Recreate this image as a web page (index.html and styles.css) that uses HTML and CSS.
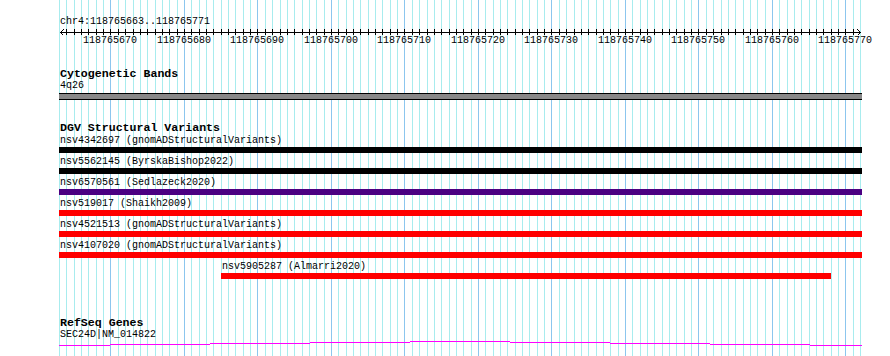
FILE: index.html
```html
<!doctype html>
<html lang="en">
<head>
<meta charset="utf-8">
<title>chr4:118765663..118765771</title>
<link rel="stylesheet" href="styles.css">
</head>
<body>

	<div class="view">

		<div class="gutter"></div>

		<div class="panel">

			<svg class="grid" id="grid" width="803" height="356"></svg>

			<div class="ruler">
				<div class="label">chr4:118765663..118765771</div>
				<svg class="axis" id="axis" width="803" height="9"></svg>
				<div class="ticks" id="ticks"></div>
			</div>

			<section class="track">
				<h2>Cytogenetic Bands</h2>
				<div class="label">4q26</div>
				<div class="band"></div>
			</section>

			<section class="track">
				<h2>DGV Structural Variants</h2>
				<div class="feature">
					<div class="label">nsv4342697 (gnomADStructuralVariants)</div>
					<div class="bar black"></div>
				</div>
				<div class="feature">
					<div class="label">nsv5562145 (ByrskaBishop2022)</div>
					<div class="bar black"></div>
				</div>
				<div class="feature">
					<div class="label">nsv6570561 (Sedlazeck2020)</div>
					<div class="bar indigo"></div>
				</div>
				<div class="feature">
					<div class="label">nsv519017 (Shaikh2009)</div>
					<div class="bar red"></div>
				</div>
				<div class="feature">
					<div class="label">nsv4521513 (gnomADStructuralVariants)</div>
					<div class="bar red"></div>
				</div>
				<div class="feature">
					<div class="label">nsv4107020 (gnomADStructuralVariants)</div>
					<div class="bar red"></div>
				</div>
				<div class="feature" style="margin-left:162px;width:610px">
					<div class="label">nsv5905287 (Almarri2020)</div>
					<div class="bar red"></div>
				</div>
			</section>

			<section class="track">
				<h2 class="refseq">RefSeq Genes</h2>
				<div class="label">SEC24D|NM_014822</div>
				<svg class="gene" id="gene" width="803" height="8"></svg>
			</section>

		</div>

	</div>

<script>

	const start = 118765663;
	const step = 7.35;
	const ns = 'http://www.w3.org/2000/svg';

	function line( svg, x1, y1, x2, y2, cls ) {

		const l = document.createElementNS( ns, 'line' );
		l.setAttribute( 'x1', x1 );
		l.setAttribute( 'y1', y1 );
		l.setAttribute( 'x2', x2 );
		l.setAttribute( 'y2', y2 );
		l.setAttribute( 'class', cls );
		svg.appendChild( l );

	}

	// one guide line per base, a darker one every 10 bases
	for ( let i = 0; i < 110; i++ ) {

		const x = Math.round( i * step ) + 0.5;
		line( grid, x, 0, x, 356, ( start + i ) % 10 === 0 ? 'major' : 'minor' );

		if ( i > 0 && i < 109 ) line( axis, x, 2, x, 8, 'ink' );

		if ( ( start + i ) % 10 === 0 ) {

			const t = document.createElement( 'span' );
			t.textContent = start + i;
			t.style.left = ( Math.round( i * step ) - 27 ) + 'px';
			ticks.appendChild( t );

		}

	}

	line( axis, 1, 5.5, 802, 5.5, 'ink' );
	line( axis, 1.5, 5.5, 4.5, 2.5, 'ink' );
	line( axis, 1.5, 5.5, 4.5, 8.5, 'ink' );
	line( axis, 801.5, 5.5, 798.5, 2.5, 'ink' );
	line( axis, 801.5, 5.5, 798.5, 8.5, 'ink' );

	// gene line drawn in 100px steps, rising to the middle
	const rows = [ 5, 4, 3, 2, 1, 2, 3, 4, 5 ];
	rows.forEach( ( r, k ) => {

		const x1 = k === 0 ? 0 : 51 + ( k - 1 ) * 100;
		const x2 = k === rows.length - 1 ? 803 : 51 + k * 100;
		line( gene, x1, r + 0.5, x2, r + 0.5, 'mrna' );

	} );

</script>
</body>
</html>
```

FILE: styles.css
```css
html, body { background-color: white; height: 100%; margin: 0; overflow: hidden; }

body { color: black; font: 10px/10px "Liberation Mono", "DejaVu Sans Mono", monospace; }

.view { display: flex; height: 356px; width: 890px; }

.gutter { flex: 0 0 59px; }

.panel { flex: 0 0 803px; height: 356px; position: relative; }

.panel > * { position: relative; }

.panel > svg.grid { left: 0; position: absolute; top: 0; }

.grid line { shape-rendering: crispEdges; stroke-width: 1; }
.grid .minor { stroke: #a8ecee; }
.grid .major { stroke: #8cc6ee; }

svg line.ink { shape-rendering: crispEdges; stroke: black; stroke-width: 1; }

.label { height: 10px; padding-left: 1px; white-space: nowrap; }

.ruler { padding-top: 17px; }
.axis { display: block; }
.ticks { height: 10px; position: relative; }
.ticks span { position: absolute; top: 0; }

.track { display: flex; flex-direction: column; }

h2 { font: bold 11.6px/12px "Liberation Mono", "DejaVu Sans Mono", monospace; margin: 22px 0 0 0; padding-left: 1px; }
h2.refseq { margin-top: 34px; }

.track > .label { margin-top: 1px; }

.band { background-color: #888; border-bottom: 1px solid black; border-top: 1px solid black; height: 5px; margin-top: 2px; }

.feature { margin-bottom: 4px; }
.feature:first-of-type { margin-top: 2px; }

.bar { height: 6px; margin-top: 1px; }
.bar.black { background-color: black; }
.bar.indigo { background-color: #4b0082; }
.bar.red { background-color: red; }

.gene { display: block; }
.gene line.mrna { shape-rendering: crispEdges; stroke: magenta; stroke-width: 1; }
```
